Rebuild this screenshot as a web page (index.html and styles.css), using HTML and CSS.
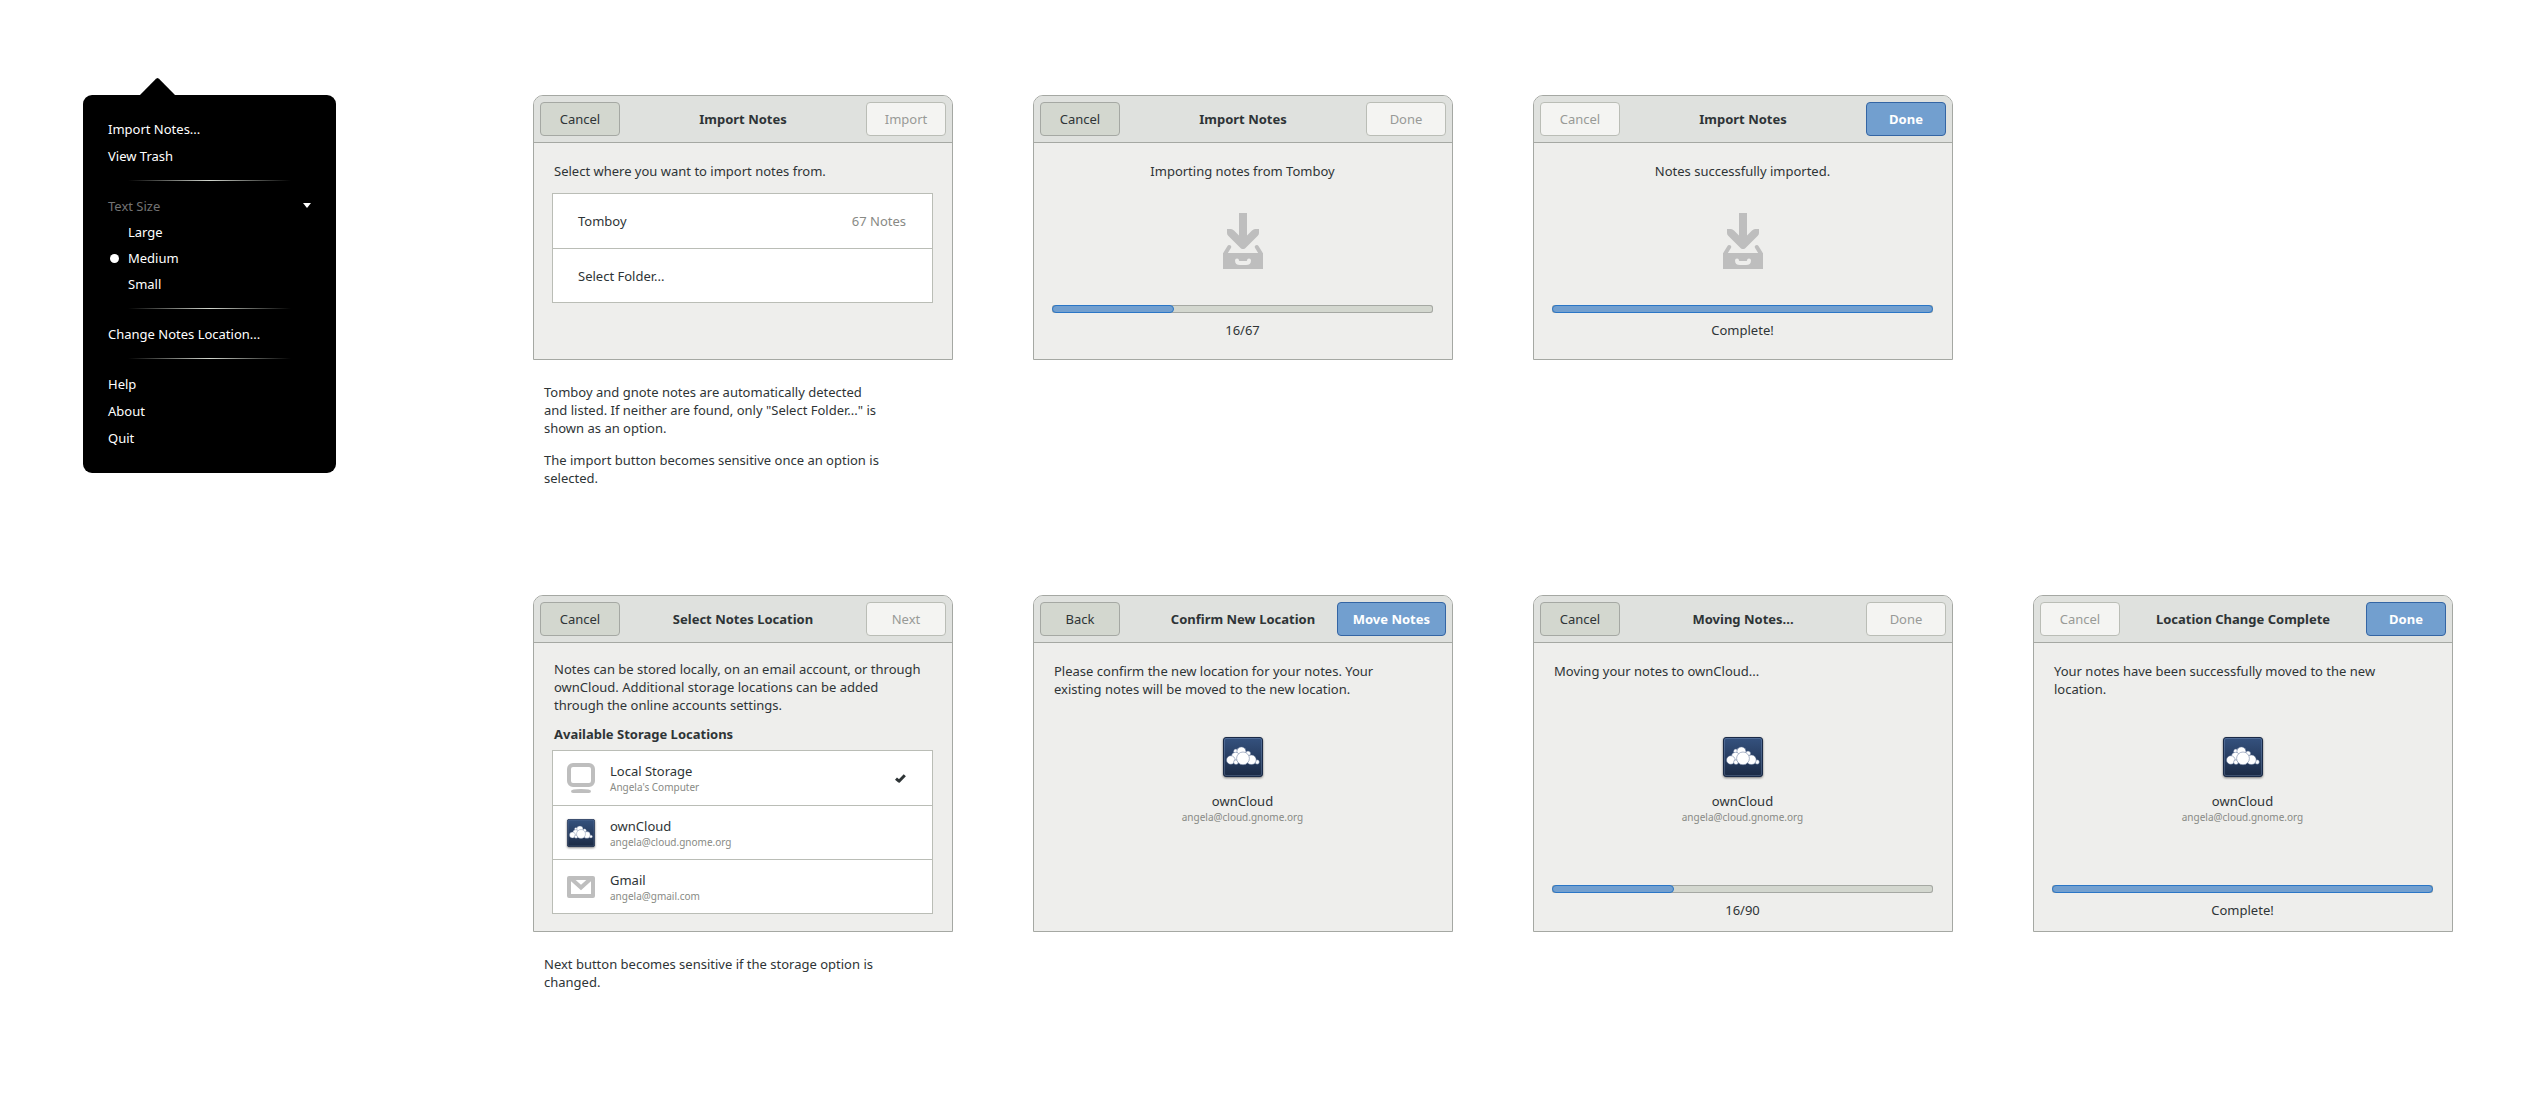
FILE: index.html
```html
<!DOCTYPE html>
<html lang="en">
<head>
<meta charset="utf-8">
<meta name="viewport" content="width=device-width, initial-scale=1">
<title>Notes: import and storage location</title>
<link rel="stylesheet" href="styles.css">
</head>
<body>
<svg class="defs" aria-hidden="true">
  <defs>
    <linearGradient id="navy" x1="0" y1="0" x2="0" y2="1">
      <stop offset="0" stop-color="#35527f"/>
      <stop offset="1" stop-color="#1b2a44"/>
    </linearGradient>
    <symbol id="owncloud" viewBox="0 0 40 40">
      <rect x=".5" y=".5" width="39" height="39" rx="2.5" fill="url(#navy)" stroke="#1a2a47"/>
      <rect x="1.5" y="1.5" width="37" height="37" rx="1.5" fill="none" stroke="#8fa9d0" stroke-opacity=".3"/>
      <g fill="#fff" stroke="#5a6f93" stroke-width=".5">
        <circle cx="25" cy="16.600" r="2.600"/>
        <circle cx="12.800" cy="14.200" r="2.200"/>
        <circle cx="18.400" cy="14.400" r="4.500"/>
        <circle cx="12.600" cy="19.600" r="4.300"/>
        <circle cx="7.800" cy="23" r="4.300"/>
        <circle cx="13" cy="25.200" r="2.400"/>
        <circle cx="34.200" cy="25" r="2.200"/>
        <circle cx="28.400" cy="22.800" r="4.800"/>
        <circle cx="20" cy="21.400" r="6.400"/>
      </g>
    </symbol>
    <symbol id="tray" viewBox="0 0 40 56">
      <path fill="#bebebe" d="M16 0h8v22.500l5-5Q30.500 16 32 16h4v4q0 1.500-1.200 2.800L22 35.500q-2 1.200-4 0L5.200 22.800Q4 21.500 4 20v-4h4q1.500 0 3 1.500l5 5z"/>
      <path fill="none" stroke="#bebebe" stroke-width="4" stroke-linecap="round" d="M2.200 40.500 6.200 34M37.800 40.500 33.800 34"/>
      <path fill="#bebebe" d="M0 40h40v16H0z"/>
      <path fill="none" stroke="#eeeeec" stroke-width="4" stroke-linecap="round" stroke-linejoin="round" d="M14 47.500q0 2.500 3 2.500h6q3 0 3-2.500"/>
    </symbol>
  </defs>
</svg>

<main class="board">
  <nav class="menu" aria-label="Application menu">
    <button class="item" type="button">Import Notes...</button>
    <button class="item" type="button">View Trash</button>
    <hr class="rule">
    <button class="item expander" type="button" aria-expanded="true">Text Size
      <svg class="caret" viewBox="0 0 8 5" aria-hidden="true"><path fill="#fff" d="M0 0h8L4 5z"/></svg>
    </button>
    <label class="choice"><input class="dot" type="radio" name="size">Large</label>
    <label class="choice"><input class="dot" type="radio" name="size" checked>Medium</label>
    <label class="choice"><input class="dot" type="radio" name="size">Small</label>
    <hr class="rule">
    <button class="item" type="button">Change Notes Location...</button>
    <hr class="rule">
    <button class="item" type="button">Help</button>
    <button class="item" type="button">About</button>
    <button class="item" type="button">Quit</button>
  </nav>

  <div class="flows">
    <section class="flow" aria-label="Import notes">
      <div class="step">
        <article class="dialog">
          <header class="bar">
            <button class="btn" type="button">Cancel</button>
            <h2 class="title">Import Notes</h2>
            <button class="btn end" type="button" disabled>Import</button>
          </header>
          <div class="content">
            <p class="text">Select where you want to import notes from.</p>
            <ul class="list sources">
              <li class="row"><span>Tomboy</span><span class="count">67 Notes</span></li>
              <li class="row"><span>Select Folder...</span></li>
            </ul>
          </div>
        </article>
        <div class="caption">
          <p>Tomboy and gnote notes are automatically detected<br>and listed. If neither are found, only "Select Folder..." is<br>shown as an option.</p>
          <p>The import button becomes sensitive once an option is<br>selected.</p>
        </div>
      </div>

      <div class="step">
        <article class="dialog">
          <header class="bar">
            <button class="btn" type="button">Cancel</button>
            <h2 class="title">Import Notes</h2>
            <button class="btn end" type="button" disabled>Done</button>
          </header>
          <div class="content">
            <p class="text centered">Importing notes from Tomboy</p>
            <svg class="tray" aria-hidden="true"><use href="#tray"/></svg>
            <div class="status">
              <progress class="progress" value="32" max="100" aria-label="Import progress"></progress>
              <p>16/67</p>
            </div>
          </div>
        </article>
      </div>

      <div class="step">
        <article class="dialog">
          <header class="bar">
            <button class="btn" type="button" disabled>Cancel</button>
            <h2 class="title">Import Notes</h2>
            <button class="btn primary end" type="button">Done</button>
          </header>
          <div class="content">
            <p class="text centered">Notes successfully imported.</p>
            <svg class="tray" aria-hidden="true"><use href="#tray"/></svg>
            <div class="status">
              <progress class="progress" value="100" max="100" aria-label="Import progress"></progress>
              <p>Complete!</p>
            </div>
          </div>
        </article>
      </div>
    </section>

    <section class="flow tall" aria-label="Change notes location">
      <div class="step">
        <article class="dialog">
          <header class="bar">
            <button class="btn" type="button">Cancel</button>
            <h2 class="title">Select Notes Location</h2>
            <button class="btn end" type="button" disabled>Next</button>
          </header>
          <div class="content dense">
            <p class="text">Notes can be stored locally, on an email account, or through<br>ownCloud. Additional storage locations can be added<br>through the online accounts settings.</p>
            <h3 class="heading">Available Storage Locations</h3>
            <ul class="list places">
              <li class="row">
                <svg class="icon" viewBox="0 0 28 30" height="30" aria-hidden="true">
                  <rect x="2" y="2" width="24" height="20" rx="4" fill="none" stroke="#bebebe" stroke-width="4"/>
                  <path fill="#bebebe" d="M4 28q0-2 10-2t10 2q0 2-2 2H6q-2 0-2-2z"/>
                </svg>
                <div><p>Local Storage</p><p class="sub">Angela's Computer</p></div>
                <svg class="check" viewBox="0 0 11 9" role="img" aria-label="Selected"><path fill="none" stroke="#2e3436" stroke-width="3" stroke-linejoin="round" d="M1 4.600 4 7.200 9.800 1.200"/></svg>
              </li>
              <li class="row">
                <svg class="icon shadow" height="28" aria-hidden="true"><use href="#owncloud"/></svg>
                <div><p>ownCloud</p><p class="sub">angela@cloud.gnome.org</p></div>
              </li>
              <li class="row">
                <svg class="icon" viewBox="0 0 28 22" height="22" aria-hidden="true">
                  <rect x="2" y="2" width="24" height="18" fill="none" stroke="#bebebe" stroke-width="4" stroke-linejoin="round"/>
                  <path fill="none" stroke="#bebebe" stroke-width="4" d="M4 2.500l10 9 10-9"/>
                </svg>
                <div><p>Gmail</p><p class="sub">angela@gmail.com</p></div>
              </li>
            </ul>
          </div>
        </article>
        <div class="caption">
          <p>Next button becomes sensitive if the storage option is<br>changed.</p>
        </div>
      </div>

      <div class="step">
        <article class="dialog">
          <header class="bar">
            <button class="btn" type="button">Back</button>
            <h2 class="title">Confirm New Location</h2>
            <button class="btn primary end" type="button">Move Notes</button>
          </header>
          <div class="content">
            <p class="text">Please confirm the new location for your notes. Your<br>existing notes will be moved to the new location.</p>
            <div class="account">
              <svg class="logo shadow" aria-hidden="true"><use href="#owncloud"/></svg>
              <p>ownCloud</p><p class="sub">angela@cloud.gnome.org</p>
            </div>
          </div>
        </article>
      </div>

      <div class="step">
        <article class="dialog">
          <header class="bar">
            <button class="btn" type="button">Cancel</button>
            <h2 class="title">Moving Notes...</h2>
            <button class="btn end" type="button" disabled>Done</button>
          </header>
          <div class="content">
            <p class="text">Moving your notes to ownCloud...</p>
            <div class="account">
              <svg class="logo shadow" aria-hidden="true"><use href="#owncloud"/></svg>
              <p>ownCloud</p><p class="sub">angela@cloud.gnome.org</p>
            </div>
            <div class="status">
              <progress class="progress" value="32" max="100" aria-label="Move progress"></progress>
              <p>16/90</p>
            </div>
          </div>
        </article>
      </div>

      <div class="step">
        <article class="dialog">
          <header class="bar">
            <button class="btn" type="button" disabled>Cancel</button>
            <h2 class="title">Location Change Complete</h2>
            <button class="btn primary end" type="button">Done</button>
          </header>
          <div class="content">
            <p class="text">Your notes have been successfully moved to the new<br>location.</p>
            <div class="account">
              <svg class="logo shadow" aria-hidden="true"><use href="#owncloud"/></svg>
              <p>ownCloud</p><p class="sub">angela@cloud.gnome.org</p>
            </div>
            <div class="status">
              <progress class="progress" value="100" max="100" aria-label="Move progress"></progress>
              <p>Complete!</p>
            </div>
          </div>
        </article>
      </div>
    </section>
  </div>
</main>
</body>
</html>
```
FILE: styles.css
```css
*, *::before, *::after { box-sizing: border-box; }

body {
  margin: 0;
  background: #fff;
  color: #2e3436;
  font: 13px/18px "Noto Sans", "Open Sans", sans-serif;
}

p, h2, h3, ul { margin: 0; padding: 0; }
h2, h3 { font-size: inherit; }
button { font: inherit; color: inherit; }

.defs { position: absolute; width: 0; height: 0; }

.board {
  display: flex;
  align-items: flex-start;
  gap: 197px;
  padding: 95px 87px 80px 83px;
}

/* Application menu */
.menu {
  position: relative;
  flex: 0 0 253px;
  display: flex;
  flex-direction: column;
  padding: 21px 25px;
  border-radius: 9px;
  background: #000;
  color: #fff;
}

.menu::before {
  content: "";
  position: absolute;
  top: -17px;
  left: 56px;
  width: 37px;
  height: 18px;
  background: #000;
  clip-path: polygon(0 100%, 46% 4%, 50% 0, 54% 4%, 100% 100%);
}

.item {
  height: 27px;
  padding: 0 0 2px;
  border: 0;
  background: none;
  text-align: left;
}

.expander {
  display: flex;
  align-items: center;
  justify-content: space-between;
  color: #737373;
}

.caret { width: 8px; height: 5px; }

.choice {
  display: flex;
  align-items: center;
  gap: 9px;
  height: 26px;
  padding: 0 0 2px 2px;
}

.dot {
  appearance: none;
  width: 9px;
  height: 9px;
  margin: 0;
  border-radius: 50%;
}

.dot:checked { background: #fff; }

.rule {
  width: 163px;
  height: 1px;
  margin: 10px auto 12px;
  border: 0;
  background: linear-gradient(90deg, transparent, #d3d7cf, transparent);
}

/* Dialog storyboards */
.flows {
  flex: 1;
  display: grid;
  gap: 108px;
  min-width: 0;
}

.flow {
  display: grid;
  grid-template-columns: repeat(4, minmax(0, 1fr));
  align-items: start;
  gap: 80px;
}

.dialog {
  display: flex;
  flex-direction: column;
  min-height: 265px;
  border: 1px solid #a5a8a3;
  border-radius: 10px 10px 0 0;
  background: #eeeeec;
}

.tall .dialog { min-height: 337px; }

.bar {
  display: grid;
  grid-template-columns: 1fr auto 1fr;
  align-items: center;
  padding: 6px;
  border-bottom: 1px solid #a5a8a3;
  border-radius: 9px 9px 0 0;
  background: #dfe1de;
}

.btn {
  justify-self: start;
  min-width: 80px;
  height: 34px;
  padding: 0 15px;
  border: 1px solid #a5a8a3;
  border-radius: 4px;
  background: #d3d7cf;
}

.btn.end { justify-self: end; }

.btn:disabled {
  border-color: #babdb6;
  background: #f4f4f2;
  color: #989a97;
}

.btn.primary {
  border-color: #3465a4;
  background: #729fcf;
  color: #fff;
  font-weight: 700;
}

.content {
  flex: 1;
  display: flex;
  flex-direction: column;
  padding: 19px 19px 20px 18px;
}

.content.dense { padding-top: 17px; }
.tall .content { padding-bottom: 12px; }

.text { padding-left: 2px; white-space: nowrap; }
.text.centered { padding: 0; text-align: center; }
.tall .text { min-height: 36px; }

.heading { margin-top: 11px; padding-left: 2px; }

.list {
  list-style: none;
  border: 1px solid #babdb6;
  background: #fff;
}

.sources { margin-top: 13px; }
.places { margin-top: 7px; }

.row {
  display: flex;
  align-items: center;
  gap: 15px;
  height: 54px;
  padding: 0 26px 0 14px;
}

.sources .row { padding-left: 25px; }
.row + .row { border-top: 1px solid #babdb6; }

.count { margin-left: auto; color: #888a85; }
.check { width: 11px; height: 9px; margin-left: auto; }
.icon { flex: none; width: 28px; }
.shadow { filter: drop-shadow(0 1px 1px rgb(0 0 0 / 50%)); }

.sub {
  color: #888a85;
  font-size: 10px;
  line-height: 14px;
}

.tray {
  width: 40px;
  height: 56px;
  margin: 33px auto 0;
}

.account { margin-top: 39px; text-align: center; }

.logo {
  display: block;
  width: 40px;
  height: 40px;
  margin: 0 auto 15px;
}

.status {
  display: grid;
  gap: 8px;
  margin-top: auto;
  text-align: center;
}

.progress {
  appearance: none;
  display: block;
  width: 100%;
  height: 8px;
  border: 0;
  background: none;
}

.progress::-webkit-progress-bar {
  border-radius: 3px;
  background: #d3d7cf;
  box-shadow: inset 0 0 0 1px #a5a8a3;
}

.progress::-webkit-progress-value {
  border: 1px solid #2a76c6;
  border-radius: 4px;
  background: #729fcf;
}

.caption {
  display: grid;
  gap: 14px;
  padding: 23px 0 0 11px;
  white-space: nowrap;
}
```
